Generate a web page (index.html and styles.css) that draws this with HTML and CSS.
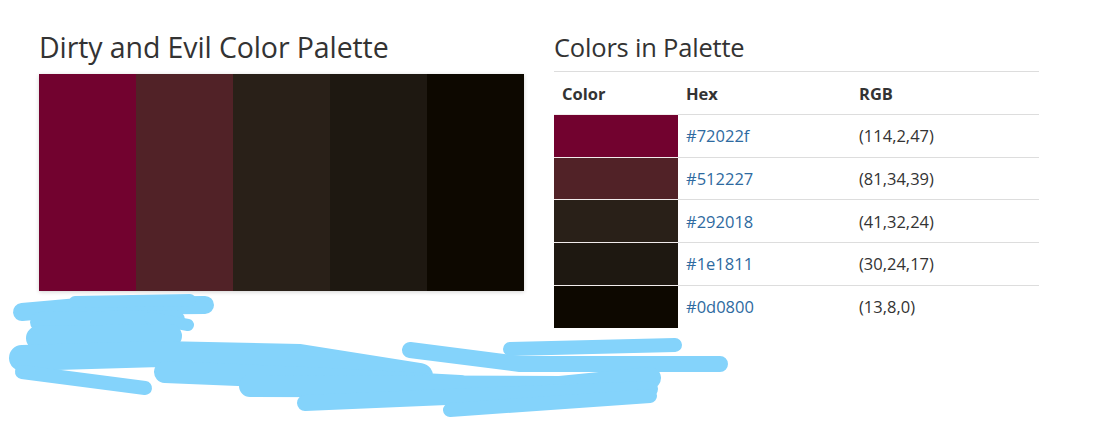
FILE: index.html
```html
<!DOCTYPE html>
<html>
<head>
<meta charset="utf-8">
<link rel="stylesheet" href="styles.css">
</head>
<body>
<div class="page">
  <section class="left">
    <h2 class="title">Dirty and Evil Color Palette</h2>
    <div class="palette">
      <div class="stripe" style="background:#72022f"></div>
      <div class="stripe" style="background:#512227"></div>
      <div class="stripe" style="background:#292018"></div>
      <div class="stripe" style="background:#1e1811"></div>
      <div class="stripe" style="background:#0d0800"></div>
    </div>
  </section>
  <section class="right">
    <h3 class="subtitle">Colors in Palette</h3>
    <table class="colors">
      <thead>
        <tr><th class="c1">Color</th><th class="c2">Hex</th><th class="c3">RGB</th></tr>
      </thead>
      <tbody>
        <tr><td class="sw" style="background:#72022f"></td><td class="hex">#72022f</td><td class="rgb">(114,2,47)</td></tr>
        <tr><td class="sw" style="background:#512227"></td><td class="hex">#512227</td><td class="rgb">(81,34,39)</td></tr>
        <tr><td class="sw" style="background:#292018"></td><td class="hex">#292018</td><td class="rgb">(41,32,24)</td></tr>
        <tr><td class="sw" style="background:#1e1811"></td><td class="hex">#1e1811</td><td class="rgb">(30,24,17)</td></tr>
        <tr><td class="sw" style="background:#0d0800"></td><td class="hex">#0d0800</td><td class="rgb">(13,8,0)</td></tr>
      </tbody>
    </table>
  </section>
</div>
<svg class="scribble" width="1094" height="428" viewBox="0 0 1094 428">
  <g fill="none" stroke="#84d3fb" stroke-linecap="round" stroke-linejoin="round">
    <path d="M22,312 L90,306 L205,305" stroke-width="18"/>
    <path d="M75,302 L190,300" stroke-width="12"/>
    <path d="M40,322 L175,320" stroke-width="20"/>
    <path d="M150,318 L188,325" stroke-width="12"/>
    <path d="M38,338 L170,336" stroke-width="24"/>
    <path d="M22,358 L160,354 L300,357 L420,376" stroke-width="26"/>
    <path d="M22,372 L145,388" stroke-width="14"/>
    <path d="M165,372 L330,379 L460,386" stroke-width="22"/>
    <path d="M410,350 L520,364 L720,364" stroke-width="16"/>
    <path d="M510,349 L675,345" stroke-width="14"/>
    <path d="M250,386 L560,387 L650,378" stroke-width="22"/>
    <path d="M305,403 L470,396 L650,389" stroke-width="16"/>
    <path d="M450,410 L650,396" stroke-width="14"/>
  </g>
</svg>
</body>
</html>
```
FILE: styles.css
```css
html, body {
  margin: 0;
  padding: 0;
  background: #fff;
}
body {
  font-family: "Open Sans", "Noto Sans", sans-serif;
  color: #333;
  position: relative;
  width: 1094px;
  height: 428px;
  overflow: hidden;
}
.page {
  display: flex;
  gap: 30px;
  padding-left: 39px;
  padding-top: 28px;
}
.left, .right {
  width: 485px;
}
.title {
  margin: 0 0 8px 0;
  font-weight: 400;
  font-size: 28.5px;
  line-height: 38px;
  letter-spacing: -0.1px;
}
.palette {
  display: flex;
  height: 217px;
  box-shadow: 0 1px 4px rgba(0,0,0,0.18);
}
.stripe {
  flex: 1;
}
.subtitle {
  margin: 0 0 5px 0;
  font-weight: 400;
  font-size: 25.5px;
  line-height: 38px;
  letter-spacing: -0.2px;
}
.colors {
  width: 485px;
  border-collapse: collapse;
  border-top: 1px solid #ddd;
  font-size: 16.5px;
  table-layout: fixed;
}
.colors th,
.colors td {
  box-sizing: border-box;
  padding: 0 8px;
  height: 42.7px;
  vertical-align: middle;
}
.colors th {
  text-align: left;
  font-weight: 700;
  height: 43px;
}
.c1 { width: 124px; }
.c2 { width: 173px; }
.c3 { width: 188px; }
.colors td {
  border-top: 1px solid #ddd;
}
.colors td.sw {
  border-top-color: #f2ecec;
}
.hex {
  color: #2e6aa0;
}
.rgb {
  color: #333;
}
.scribble {
  position: absolute;
  left: 0;
  top: 0;
  pointer-events: none;
}
```
